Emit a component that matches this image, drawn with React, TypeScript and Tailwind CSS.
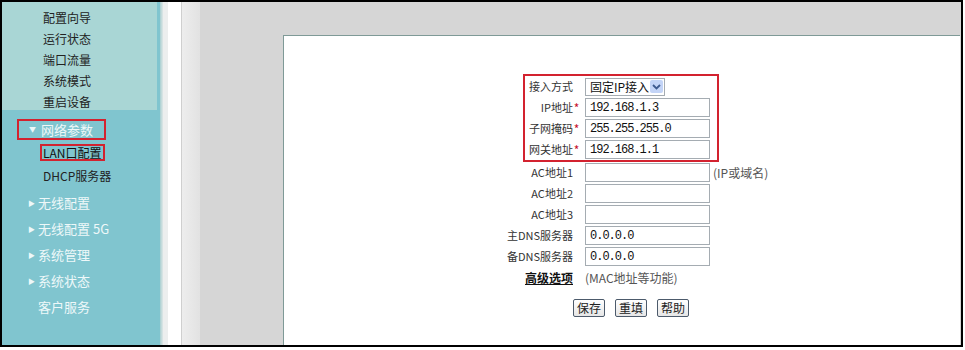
import React from "react";

const cjk = { fontFamily: '"Noto Sans CJK SC", "Liberation Sans", sans-serif' };
const mono = { fontFamily: '"Liberation Mono", "Noto Sans CJK SC", monospace' };

function Label({ text, required, wide }: { text: string; required?: boolean; wide?: boolean }) {
  return (
    <div
      className={`flex justify-end items-center whitespace-nowrap text-[11px] text-[#333] ${
        wide ? "w-[80px]" : "w-[55px]"
      }`}
    >
      {text}
      <span className={`w-[7px] text-center text-[12px] ${required ? "text-[#c8102e]" : "text-transparent"}`}>*</span>
    </div>
  );
}

function Field({ value }: { value?: string }) {
  return (
    <div
      className="ml-[5px] w-[125px] h-[19px] border border-[#a5acb2] bg-white flex items-center pl-[4px] text-[12px] tracking-[-1px] text-[#111]"
      style={mono}
    >
      {value}
    </div>
  );
}

function Btn({ text }: { text: string }) {
  return (
    <div className="h-[18px] px-[3px] flex items-center rounded-[2px] border border-[#4c5a6b] bg-gradient-to-b from-white to-[#e6e6e6] text-[12px] text-[#222]">
      {text}
    </div>
  );
}

const topItems = ["配置向导", "运行状态", "端口流量", "系统模式", "重启设备"];
const bigItems = ["无线配置", "无线配置 5G", "系统管理", "系统状态"];

export default function App() {
  return (
    <div className="w-[965px] h-[350px] bg-white" style={cjk}>
      <div className="w-[963px] h-[347px] border-2 border-black flex overflow-hidden">
        {/* sidebar */}
        <div className="w-[158px] bg-[#80c5cf] flex flex-col">
          <div className="h-[108px] mr-[3px] bg-[#a9d6d5] pt-[5px]">
            {topItems.map((t) => (
              <div key={t} className="h-[21px] pl-[41px] flex items-center text-[12px] text-[#222]">
                {t}
              </div>
            ))}
          </div>
          <div className="mt-[9px] ml-[15px] w-[89px] h-[21px] border-2 border-[#d3222f] flex items-center text-[13px] text-[#eef8f9]">
            <span className="ml-[10px] mr-[5px] text-[7px]">▼</span>
            网络参数
          </div>
          <div className="mt-[4px] ml-[38px] w-[65px] h-[17px] border-2 border-[#d3222f] flex items-center pl-[1px] text-[12px] text-[#111]">
            LAN口配置
          </div>
          <div className="mt-[4px] h-[21px] pl-[41px] flex items-center text-[12px] text-[#222]">
            DHCP服务器
          </div>
          <div className="mt-[4px]">
            {bigItems.map((t) => (
              <div key={t} className="h-[26px] flex items-center text-[13px] text-[#eef8f9]">
                <span className="ml-[26px] mr-[5px] text-[7px] w-[5px]">▶</span>
                {t}
              </div>
            ))}
            <div className="h-[26px] flex items-center pl-[36px] text-[13px] text-[#eef8f9]">客户服务</div>
          </div>
        </div>

        {/* separator strips */}
        <div className="w-[3px] bg-gradient-to-r from-[#a8cfd1] to-[#dfe7e7]" />
        <div className="w-[5px] bg-[#eceeee]" />
        <div className="w-[13px] bg-white" />
        <div className="w-[1px] bg-[#cfcfcf]" />
        <div className="w-[18px] bg-gradient-to-r from-[#ededed] to-[#e2e2e2]" />

        {/* main */}
        <div className="flex-1 bg-[#d6d6d6] pl-[83px] pt-[33px] pr-[1px] flex">
          <div className="flex-1 bg-white border-t border-l border-[#7f9a97] pl-[216px] pt-[38px]">
            <div className="ml-[23px] w-[196px] border-2 border-[#d3222f]">
              <div className="h-[21px] flex items-center">
                <Label text="接入方式" />
                <div className="ml-[5px] w-[80px] h-[18px] border border-[#a5acb2] flex items-center pl-[4px] text-[12px] text-[#111]">
                  <span className="flex-1">固定IP接入</span>
                  <span className="w-[13px] h-[13px] mr-[1px] rounded-[2px] bg-[#c3d4f7] flex items-center justify-center">
                    <svg width="9" height="6" viewBox="0 0 9 6">
                      <path d="M1 1 L4.5 4.5 L8 1" stroke="#3d5a8f" strokeWidth="1.8" fill="none" />
                    </svg>
                  </span>
                </div>
              </div>
              <div className="h-[21px] flex items-center">
                <Label text="IP地址" required />
                <Field value="192.168.1.3" />
              </div>
              <div className="h-[21px] flex items-center">
                <Label text="子网掩码" required />
                <Field value="255.255.255.0" />
              </div>
              <div className="h-[21px] flex items-center">
                <Label text="网关地址" required />
                <Field value="192.168.1.1" />
              </div>
            </div>
            <div className="h-[21px] flex items-center">
              <Label text="AC地址1" wide />
              <Field />
              <span className="ml-[3px] text-[12px] text-[#555]">(IP或域名)</span>
            </div>
            <div className="h-[21px] flex items-center">
              <Label text="AC地址2" wide />
              <Field />
            </div>
            <div className="h-[21px] flex items-center">
              <Label text="AC地址3" wide />
              <Field />
            </div>
            <div className="h-[21px] flex items-center">
              <Label text="主DNS服务器" wide />
              <Field value="0.0.0.0" />
            </div>
            <div className="h-[21px] flex items-center">
              <Label text="备DNS服务器" wide />
              <Field value="0.0.0.0" />
            </div>
            <div className="h-[21px] flex items-center">
              <div className="w-[73px] flex justify-end text-[12px] font-bold underline text-[#111]">高级选项</div>
              <span className="ml-[12px] text-[12px] text-[#555]">(MAC地址等功能)</span>
            </div>
            <div className="mt-[11px] ml-[73px] flex gap-[10px]">
              <Btn text="保存" />
              <Btn text="重填" />
              <Btn text="帮助" />
            </div>
          </div>
        </div>
      </div>
    </div>
  );
}
